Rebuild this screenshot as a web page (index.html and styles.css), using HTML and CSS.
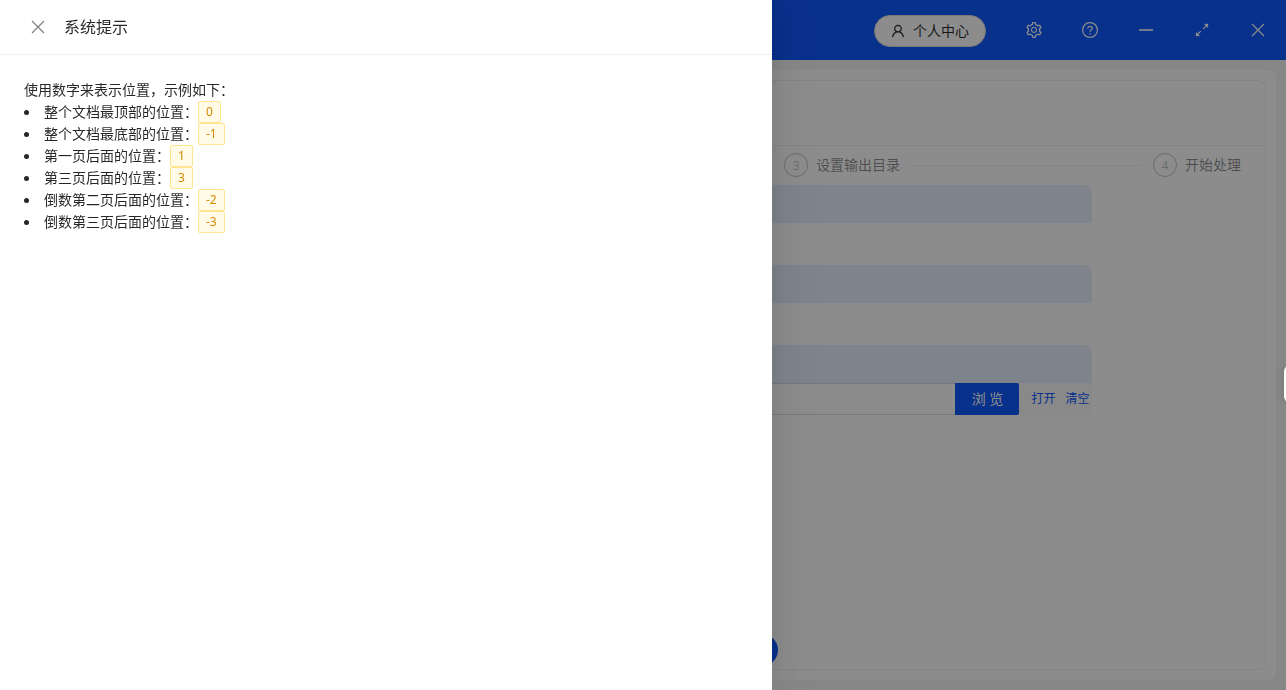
FILE: index.html
```html
<!DOCTYPE html>
<html lang="zh-CN">
<head>
<meta charset="utf-8">
<title>系统提示</title>
<link rel="stylesheet" href="styles.css">
</head>
<body>
<div class="app">
  <header class="topbar">
    <button type="button" class="profile">
      <svg class="icon-user" viewBox="64 64 896 896"><path fill="currentColor" d="M858.5 763.6a374 374 0 00-80.6-119.5 375.63 375.63 0 00-119.5-80.6c-.4-.2-.8-.3-1.2-.5C719.5 518 760 444.7 760 362c0-137-111-248-248-248S264 225 264 362c0 82.7 40.5 156 102.8 201.1-.4.2-.8.3-1.2.5-44.8 18.9-85 46-119.5 80.6a375.63 375.63 0 00-80.6 119.5A371.7 371.7 0 00136 901.8a8 8 0 008 8.2h60c4.4 0 7.9-3.5 8-7.8 2-77.2 33-149.5 87.8-204.3 56.7-56.7 132-87.9 212.2-87.9s155.5 31.2 212.2 87.9C779 752.7 810 825 812 902.2c.1 4.4 3.6 7.8 8 7.8h60a8 8 0 008-8.2c-1-47.8-10.9-94.3-29.5-138.2zM512 534c-45.9 0-89.1-17.9-121.6-50.4S340 407.9 340 362c0-45.9 17.9-89.1 50.4-121.6S466.1 190 512 190s89.1 17.9 121.6 50.4S684 316.1 684 362c0 45.9-17.9 89.1-50.4 121.6S557.9 534 512 534z"/></svg>
      <span>个人中心</span>
    </button>
    <button type="button" class="tool" aria-label="设置">
      <svg viewBox="64 64 896 896"><path fill="currentColor" d="M924.8 625.7l-65.5-56c3.1-19 4.7-38.4 4.7-57.8s-1.6-38.8-4.7-57.8l65.5-56a32.03 32.03 0 009.3-35.2l-.9-2.6a443.74 443.74 0 00-79.7-137.9l-1.8-2.1a32.12 32.12 0 00-35.1-9.5l-81.3 28.9c-30-24.6-63.5-44-99.7-57.6l-15.7-85a32.05 32.05 0 00-25.8-25.7l-2.7-.5c-52.1-9.4-106.9-9.4-159 0l-2.7.5a32.05 32.05 0 00-25.8 25.7l-15.8 85.4a351.86 351.86 0 00-99 57.4l-81.9-29.1a32 32 0 00-35.1 9.5l-1.8 2.1a446.02 446.02 0 00-79.7 137.9l-.9 2.6c-4.5 12.5-.8 26.5 9.3 35.2l66.3 56.6c-3.1 18.8-4.6 38-4.6 57.1 0 19.2 1.5 38.4 4.6 57.1L99 625.5a32.03 32.03 0 00-9.3 35.2l.9 2.6c18.1 50.4 44.9 96.9 79.7 137.9l1.8 2.1a32.12 32.12 0 0035.1 9.5l81.9-29.1c29.8 24.5 63.1 43.9 99 57.4l15.8 85.4a32.05 32.05 0 0025.8 25.7l2.7.5a449.4 449.4 0 00159 0l2.7-.5a32.05 32.05 0 0025.8-25.7l15.7-85a350 350 0 0099.7-57.6l81.3 28.9a32 32 0 0035.1-9.5l1.8-2.1c34.8-41.1 61.6-87.5 79.7-137.9l.9-2.6c4.5-12.3.8-26.3-9.3-35zM788.3 465.9c2.5 15.1 3.8 30.6 3.8 46.1s-1.3 31-3.8 46.1l-6.6 40.1 74.7 63.9a370.03 370.03 0 01-42.6 73.6L721 702.8l-31.4 25.8c-23.9 19.6-50.5 35-79.3 45.8l-38.1 14.3-17.9 97a377.5 377.5 0 01-85 0l-17.9-97.2-37.8-14.5c-28.5-10.8-55-26.2-78.7-45.7l-31.4-25.9-93.4 33.2c-17-22.9-31.2-47.6-42.6-73.6l75.5-64.5-6.5-40c-2.4-14.9-3.7-30.3-3.7-45.5 0-15.3 1.2-30.6 3.7-45.5l6.5-40-75.5-64.5c11.3-26.1 25.6-50.7 42.6-73.6l93.4 33.2 31.4-25.9c23.7-19.5 50.2-34.9 78.7-45.7l37.9-14.3 17.9-97.2c28.1-3.2 56.8-3.2 85 0l17.9 97 38.1 14.3c28.7 10.8 55.4 26.2 79.3 45.8l31.4 25.8 92.8-32.9c17 22.9 31.2 47.6 42.6 73.6L781.8 426l6.5 39.9zM512 326c-97.2 0-176 78.8-176 176s78.8 176 176 176 176-78.8 176-176-78.8-176-176-176zm79.2 255.2A111.6 111.6 0 01512 614c-29.9 0-58-11.7-79.2-32.8A111.6 111.6 0 01400 502c0-29.9 11.7-58 32.8-79.2C454 401.6 482.1 390 512 390c29.9 0 58 11.6 79.2 32.8A111.6 111.6 0 01624 502c0 29.9-11.7 58-32.8 79.2z"/></svg>
    </button>
    <button type="button" class="tool" aria-label="帮助">
      <svg class="line" viewBox="0 0 16 16"><circle cx="8" cy="8" r="7.4"/><path d="M5.7 6.500c0-1.300 1-2.200 2.300-2.200s2.300.9 2.300 2.100c0 1.700-2.300 1.600-2.300 3.300"/><path d="M8 11v1.400"/></svg>
    </button>
    <button type="button" class="tool" aria-label="最小化">
      <svg class="line" viewBox="0 0 16 16"><path stroke-width="1.6" d="M1 8h14"/></svg>
    </button>
    <button type="button" class="tool" aria-label="最大化">
      <svg class="line" viewBox="0 0 16 16"><path d="M9.200 6.800l4-4M6.800 9.200l-4 4"/><path class="solid" d="M10 2l4.200-.2L14 6zM2 10l-.2 4.200L6 14z"/></svg>
    </button>
    <button type="button" class="tool" aria-label="关闭窗口">
      <svg class="line" viewBox="0 0 16 16"><path d="M2 2l12 12M14 2L2 14"/></svg>
    </button>
  </header>

  <main class="workspace">
    <div class="panel">
      <section class="card">
        <div class="card-head"></div>
        <div class="card-body">
          <ol class="steps">
            <li class="step step-grow"><span class="step-num">3</span><span>设置输出目录</span></li>
            <li class="step"><span class="step-num">4</span><span>开始处理</span></li>
          </ol>
          <form class="form">
            <div class="group"><div class="band"></div></div>
            <div class="group"><div class="band"></div></div>
            <div class="group">
              <div class="band"></div>
              <div class="path-row">
                <input type="text" class="path" aria-label="输出目录">
                <button type="button" class="browse">浏 览</button>
                <div class="links"><a href="#">打开</a><a href="#">清空</a></div>
              </div>
            </div>
          </form>
        </div>
        <div class="card-foot"><button type="button" class="action" aria-label="下一步"></button></div>
      </section>
    </div>
  </main>
</div>

<div class="mask"></div>
<div class="side-tab"></div>

<aside class="drawer" role="dialog" aria-labelledby="drawer-title">
  <div class="drawer-head">
    <button type="button" class="close" aria-label="关闭">
      <svg class="line" viewBox="0 0 16 16"><path d="M2 2l12 12M14 2L2 14"/></svg>
    </button>
    <h1 class="drawer-title" id="drawer-title">系统提示</h1>
  </div>
  <div class="drawer-body">
    <p class="intro">使用数字来表示位置，示例如下：</p>
    <ul class="examples">
      <li>整个文档最顶部的位置：<span class="tag">0</span></li>
      <li>整个文档最底部的位置：<span class="tag">-1</span></li>
      <li>第一页后面的位置：<span class="tag">1</span></li>
      <li>第三页后面的位置：<span class="tag">3</span></li>
      <li>倒数第二页后面的位置：<span class="tag">-2</span></li>
      <li>倒数第三页后面的位置：<span class="tag">-3</span></li>
    </ul>
  </div>
</aside>
</body>
</html>
```

FILE: styles.css
```css
* {
  box-sizing: border-box;
}

body {
  margin: 0;
  color: rgba(0, 0, 0, 0.85);
  font-family: "Noto Sans", "Noto Sans CJK SC", sans-serif;
  font-size: 14px;
  font-weight: 400;
  line-height: 22px;
}

button,
input {
  margin: 0;
  padding: 0;
  border: 0;
  background: none;
  color: inherit;
  font: inherit;
}

svg {
  display: block;
  width: 16px;
  height: 16px;
}

.line {
  fill: none;
  stroke: currentColor;
  stroke-width: 1.2;
}

.solid {
  fill: currentColor;
  stroke: none;
}

.app {
  display: flex;
  flex-direction: column;
  min-height: 100vh;
  background: #f5f5f5;
}

/* Title bar */
.topbar {
  display: flex;
  align-items: center;
  justify-content: flex-end;
  height: 60px;
  background: #0f59ff;
  color: #fff;
}

.profile {
  display: flex;
  align-items: center;
  gap: 8px;
  height: 32px;
  margin: 2px 20px 0 0;
  padding: 0 16px;
  border: 1px solid #d9d9d9;
  border-radius: 16px;
  background: #fff;
  color: rgba(0, 0, 0, 0.85);
}

.icon-user {
  width: 14px;
  height: 14px;
}

.tool {
  display: grid;
  place-items: center;
  width: 56px;
  height: 60px;
}

/* Workspace */
.workspace {
  display: flex;
  flex: 1;
  padding: 10px;
}

.panel {
  display: flex;
  flex: 1;
  padding: 10px;
  border-radius: 8px;
  background: #fff;
}

.card {
  display: flex;
  flex: 1;
  flex-direction: column;
  border: 1px solid #f0f0f0;
  border-radius: 8px;
}

.card-head {
  height: 65px;
  border-bottom: 1px solid #f0f0f0;
}

.card-body {
  flex: 1;
  padding: 7px 24px 0;
}

.steps {
  display: flex;
  gap: 12px;
  margin: 0 0 8px 61.8%;
  padding: 0;
  list-style: none;
  color: rgba(0, 0, 0, 0.45);
}

.step {
  display: flex;
  align-items: center;
  gap: 8px;
  white-space: nowrap;
}

.step-grow {
  flex: 1;
}

.step-grow::after {
  content: "";
  flex: 1;
  height: 1px;
  margin-left: 4px;
  background: #f0f0f0;
}

.step-num {
  width: 24px;
  height: 24px;
  border: 1px solid rgba(0, 0, 0, 0.25);
  border-radius: 50%;
  color: rgba(0, 0, 0, 0.25);
  font-size: 12px;
  line-height: 24px;
  text-align: center;
}

.form {
  display: grid;
  gap: 42px;
  width: 75%;
  margin: 0 auto;
}

.band {
  height: 38px;
  border-radius: 8px 8px 0 0;
  background: #e6efff;
}

.path-row {
  display: flex;
  border-radius: 0 0 4px 4px;
  background: #fafafa;
}

.path {
  flex: 1;
  min-width: 0;
  height: 32px;
  border: 1px solid #d9d9d9;
  border-right: 0;
  background: #fff;
}

.browse {
  width: 64px;
  height: 32px;
  border-radius: 0 2px 2px 0;
  background: #0f59ff;
  color: #fff;
}

.links {
  display: flex;
  align-items: center;
  gap: 10px;
  padding: 0 2px 0 12px;
  font-size: 12px;
}

.links a {
  color: #0f59ff;
  text-decoration: none;
}

.card-foot {
  display: flex;
  justify-content: center;
  padding: 0 0 3px 160px;
}

.action {
  width: 110px;
  height: 32px;
  border-radius: 16px;
  background: #0f59ff;
}

/* Overlays */
.mask {
  position: fixed;
  inset: 0;
  background: rgba(0, 0, 0, 0.45);
}

.side-tab {
  position: fixed;
  top: 364px;
  right: -8px;
  width: 10px;
  height: 40px;
  border-radius: 8px 0 0 8px;
  background: #fff;
  box-shadow: 0 0 8px rgba(0, 0, 0, 0.15);
}

.drawer {
  position: fixed;
  inset: 0 auto 0 0;
  width: 60%;
  overflow: auto;
  background: #fff;
  box-shadow: 6px 0 16px -8px rgba(0, 0, 0, 0.08), 9px 0 28px rgba(0, 0, 0, 0.05), 12px 0 48px 16px rgba(0, 0, 0, 0.03);
}

.drawer-head {
  display: flex;
  align-items: center;
  gap: 18px;
  padding: 16px 30px;
  border-bottom: 1px solid #f0f0f0;
}

.close {
  color: rgba(0, 0, 0, 0.5);
}

.drawer-title {
  margin: 0;
  font-size: 16px;
  font-weight: 400;
  line-height: 22px;
}

.drawer-body {
  padding: 24px;
}

.intro {
  margin: 0;
}

.examples {
  margin: 0;
  padding: 0;
  list-style: none;
}

.examples li {
  display: flex;
  align-items: center;
}

.examples li::before {
  content: "";
  width: 5px;
  height: 5px;
  margin-right: 15px;
  border-radius: 50%;
  background: currentColor;
}

.tag {
  padding: 0 7px;
  border: 1px solid #ffe58f;
  border-radius: 2px;
  background: #fffbe6;
  color: #d48806;
  font-size: 12px;
  line-height: 20px;
}
```
